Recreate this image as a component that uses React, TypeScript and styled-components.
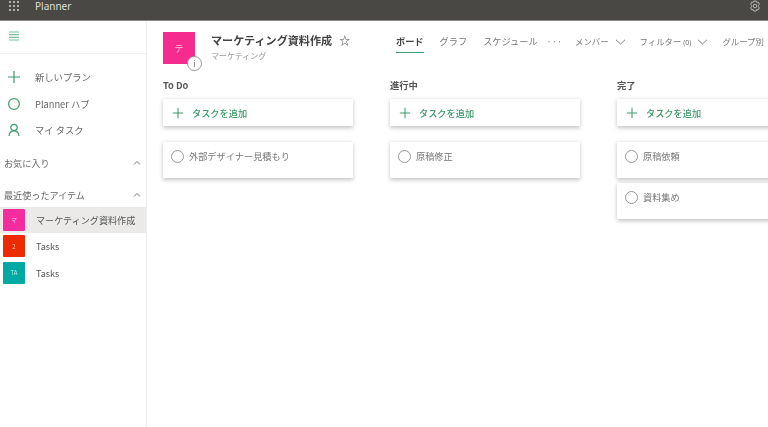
import styled, { createGlobalStyle } from 'styled-components';

const GlobalStyle = createGlobalStyle`
  html, body {
    margin: 0;
    padding: 0;
    background: #fff;
    overflow: hidden;
  }
  body {
    font-family: "Noto Sans CJK JP", "Noto Sans", sans-serif;
    color: #555;
  }
`;

const Page = styled.div`
  width: 768px;
  height: 427px;
  display: flex;
  flex-direction: column;
  overflow: hidden;
  filter: blur(0.45px);
`;

const TopBar = styled.header`
  height: 21px;
  flex: none;
  background: #4a4845;
  border-bottom: 1px solid #888;
  box-sizing: border-box;
  display: flex;
  align-items: center;
  padding: 0 7px 0 9px;
  color: #ddd;
`;

const AppName = styled.span`
  font-size: 10px;
  font-family: "Noto Sans", sans-serif;
  margin-left: 16px;
  margin-top: -8px;
  color: #dcdcdc;
`;

const Waffle = styled.svg`
  width: 10px;
  height: 10px;
  margin-top: -9px;
`;

const Gear = styled.svg`
  width: 12px;
  height: 12px;
  margin-left: auto;
  margin-top: -9px;
`;

const Body = styled.div`
  flex: 1;
  display: flex;
  min-height: 0;
`;

const Sidebar = styled.aside`
  width: 147px;
  flex: none;
  box-sizing: border-box;
  border-right: 1px solid #eeeeee;
  display: flex;
  flex-direction: column;
`;

const SideTop = styled.div`
  height: 33px;
  flex: none;
  box-sizing: border-box;
  border-bottom: 1px solid #f1f1f1;
  padding: 10px 0 0 9px;
  svg {
    display: block;
  }
`;

const NavList = styled.nav`
  display: flex;
  flex-direction: column;
  padding-top: 10px;
`;

const NavItem = styled.div`
  height: 26.5px;
  display: flex;
  align-items: center;
  font-size: 9.3px;
  color: #666;
  svg {
    width: 14px;
    height: 14px;
    margin-left: 7px;
    margin-right: 14px;
    flex: none;
  }
`;

const SectionHead = styled.div<{ $top: number }>`
  margin-top: ${p => p.$top}px;
  height: 16px;
  display: flex;
  align-items: center;
  justify-content: space-between;
  padding: 0 5px 0 4px;
  font-size: 9.1px;
  color: #666;
  svg {
    width: 8px;
    height: 6px;
  }
`;

const RecentList = styled.div`
  margin-top: 4px;
  display: flex;
  flex-direction: column;
`;

const RecentRow = styled.div<{ $active?: boolean }>`
  height: 26.5px;
  display: flex;
  align-items: center;
  padding-left: 3px;
  font-size: 9.1px;
  color: #555;
  background: ${p => (p.$active ? '#ebeae9' : 'transparent')};
`;

const RecentIcon = styled.div<{ $color: string }>`
  width: 22px;
  height: 22px;
  flex: none;
  margin-right: 11px;
  border-radius: 1px;
  background: ${p => p.$color};
  color: rgba(255, 255, 255, 0.75);
  font-size: 6px;
  display: flex;
  align-items: center;
  justify-content: center;
`;

const Main = styled.main`
  flex: 1;
  min-width: 0;
  padding: 11px 0 0 16px;
  overflow: hidden;
`;

const Header = styled.div`
  display: flex;
  height: 45px;
`;

const PlanIcon = styled.div`
  position: relative;
  width: 32px;
  height: 32px;
  flex: none;
  background: #f62b8e;
  color: rgba(255, 255, 255, 0.7);
  font-size: 9px;
  display: flex;
  align-items: center;
  justify-content: center;
`;

const InfoBadge = styled.div`
  position: absolute;
  right: -7px;
  bottom: -7px;
  width: 13px;
  height: 13px;
  border-radius: 50%;
  border: 1px solid #999;
  background: #fff;
  color: #666;
  font-size: 8px;
  line-height: 1;
  font-family: "Noto Sans", sans-serif;
  display: flex;
  align-items: center;
  justify-content: center;
`;

const TitleBlock = styled.div`
  width: 185px;
  margin-left: 16px;
  flex: none;
`;

const PlanTitle = styled.div`
  font-size: 11.1px;
  line-height: 16px;
  font-weight: 700;
  color: #444;
  white-space: nowrap;
`;

const Star = styled.span`
  margin-left: 7px;
  font-weight: 400;
`;

const PlanSub = styled.div`
  font-size: 8px;
  line-height: 12px;
  margin-top: 2px;
  color: #999;
`;

const Tabs = styled.div`
  display: flex;
  align-items: flex-start;
  white-space: nowrap;
  font-size: 9.2px;
  color: #777;
  line-height: 16px;
  padding-top: 1px;
`;

const Tab = styled.div<{ $active?: boolean; $gap: number }>`
  margin-right: ${p => p.$gap}px;
  padding-bottom: 3px;
  color: ${p => (p.$active ? '#444' : '#777')};
  font-weight: ${p => (p.$active ? 700 : 400)};
  border-bottom: 1.5px solid ${p => (p.$active ? '#3c9a6c' : 'transparent')};
`;

const FilterTab = styled(Tab)`
  font-size: 8.4px;
`;

const Caret = styled.svg`
  width: 11px;
  height: 6px;
  margin-left: 6px;
`;

const SmallCount = styled.span`
  font-size: 7px;
  font-family: "Noto Sans", sans-serif;
`;

const Board = styled.div`
  display: flex;
  gap: 37px;
  margin-top: 1px;
`;

const Column = styled.section`
  width: 190px;
  flex: none;
  display: flex;
  flex-direction: column;
`;

const ColumnTitle = styled.div`
  font-size: 9.3px;
  font-weight: 700;
  line-height: 14px;
  height: 21px;
  color: #555;
`;

const AddCard = styled.div`
  height: 27px;
  background: #fff;
  box-shadow: 0 1.5px 4px rgba(0, 0, 0, 0.24);
  border-radius: 1px;
  display: flex;
  align-items: center;
  padding-left: 9px;
  margin-bottom: 16px;
  color: #3f9a6c;
  font-size: 9.2px;
  font-weight: 500;
  svg {
    width: 12px;
    height: 12px;
    margin-right: 8px;
  }
`;

const TaskCard = styled.div`
  height: 36px;
  box-sizing: border-box;
  background: #fff;
  box-shadow: 0 1.5px 4px rgba(0, 0, 0, 0.24);
  border-radius: 1px;
  display: flex;
  align-items: flex-start;
  padding: 8px 0 0 7.5px;
  margin-bottom: 5px;
  font-size: 9.2px;
  line-height: 13px;
  color: #777;
`;

const Radio = styled.div`
  width: 13px;
  height: 13px;
  box-sizing: border-box;
  border: 1.2px solid #999;
  border-radius: 50%;
  margin-right: 5.5px;
`;

const Plus = ({ color = '#3f9a6c' }: { color?: string }) => (
  <svg viewBox="0 0 14 14" fill="none" stroke={color} strokeWidth="1.2">
    <path d="M7 1v12M1 7h12" />
  </svg>
);

const Chevron = () => (
  <svg viewBox="0 0 8 6" fill="none" stroke="#777" strokeWidth="1">
    <path d="M1 4.500 4 1.500l3 3" />
  </svg>
);

const Down = () => (
  <Caret viewBox="0 0 11 6" fill="none" stroke="#777" strokeWidth="0.9">
    <path d="M1 .8 5.500 5 10 .8" />
  </Caret>
);

const dots = [1, 5, 9].flatMap(y => [1, 5, 9].map(x => ({ x, y })));

const columns = [
  { title: 'To Do', tasks: ['外部デザイナー見積もり'] },
  { title: '進行中', tasks: ['原稿修正'] },
  { title: '完了', tasks: ['原稿依頼', '資料集め'] }
];

const App = () => {
  return (
    <Page>
      <GlobalStyle />
      <TopBar>
        <Waffle viewBox="0 0 10 10">
          {dots.map(({ x, y }) => (
            <circle key={`${x}-${y}`} cx={x} cy={y} r="0.9" fill="#e4e4e4" />
          ))}
        </Waffle>
        <AppName>Planner</AppName>
        <Gear viewBox="0 0 12 12" fill="none" stroke="#c4c4c4" strokeWidth="0.9">
          <circle cx="6" cy="6" r="1.8" />
          <path d="M4.800 1h2.400l.5 1.400 1.500-.3 1.200 2-1 1.200v1.400l1 1.200-1.200 2-1.500-.3-.5 1.400H4.800l-.5-1.400-1.500.3-1.200-2 1-1.200V5.300l-1-1.200 1.200-2 1.500.3z" />
        </Gear>
      </TopBar>
      <Body>
        <Sidebar>
          <SideTop>
            <svg width="10" height="10" viewBox="0 0 10 10" stroke="#7dbb9b" strokeWidth="1.200">
              <path d="M0 1h10M0 3.700h10M0 6.300h10M0 9h10" />
            </svg>
          </SideTop>
          <NavList>
            <NavItem>
              <Plus />
              新しいプラン
            </NavItem>
            <NavItem>
              <svg viewBox="0 0 14 14" fill="none" stroke="#3f9a6c" strokeWidth="1.200">
                <circle cx="7" cy="7" r="5.400" />
              </svg>
              Planner ハブ
            </NavItem>
            <NavItem>
              <svg viewBox="0 0 14 14" fill="none" stroke="#3f9a6c" strokeWidth="1.200">
                <circle cx="7" cy="4.500" r="3.200" />
                <path d="M2 13c.3-3 2.200-5.200 5-5.200s4.700 2.200 5 5.200" />
              </svg>
              マイ タスク
            </NavItem>
          </NavList>
          <SectionHead $top={11}>
            お気に入り
            <Chevron />
          </SectionHead>
          <SectionHead $top={16}>
            最近使ったアイテム
            <Chevron />
          </SectionHead>
          <RecentList>
            <RecentRow $active>
              <RecentIcon $color="#f62b9e">マ</RecentIcon>
              マーケティング資料作成
            </RecentRow>
            <RecentRow>
              <RecentIcon $color="#ee2a00">2</RecentIcon>
              Tasks
            </RecentRow>
            <RecentRow>
              <RecentIcon $color="#00a9a4">TA</RecentIcon>
              Tasks
            </RecentRow>
          </RecentList>
        </Sidebar>
        <Main>
          <Header>
            <PlanIcon>
              テ
              <InfoBadge>i</InfoBadge>
            </PlanIcon>
            <TitleBlock>
              <PlanTitle>
                マーケティング資料作成
                <Star>☆</Star>
              </PlanTitle>
              <PlanSub>マーケティング</PlanSub>
            </TitleBlock>
            <Tabs>
              <Tab $active $gap={16}>ボード</Tab>
              <Tab $gap={16}>グラフ</Tab>
              <Tab $gap={9}>スケジュール</Tab>
              <Tab $gap={13}>···</Tab>
              <FilterTab $gap={14}>メンバー<Down /></FilterTab>
              <FilterTab $gap={14}>フィルター <SmallCount>(0)</SmallCount><Down /></FilterTab>
              <FilterTab $gap={0}>グループ別</FilterTab>
            </Tabs>
          </Header>
          <Board>
            {columns.map(({ title, tasks }) => (
              <Column key={title}>
                <ColumnTitle>{title}</ColumnTitle>
                <AddCard>
                  <Plus />
                  タスクを追加
                </AddCard>
                {tasks.map(task => (
                  <TaskCard key={task}>
                    <Radio />
                    {task}
                  </TaskCard>
                ))}
              </Column>
            ))}
          </Board>
        </Main>
      </Body>
    </Page>
  );
};

export default App;
